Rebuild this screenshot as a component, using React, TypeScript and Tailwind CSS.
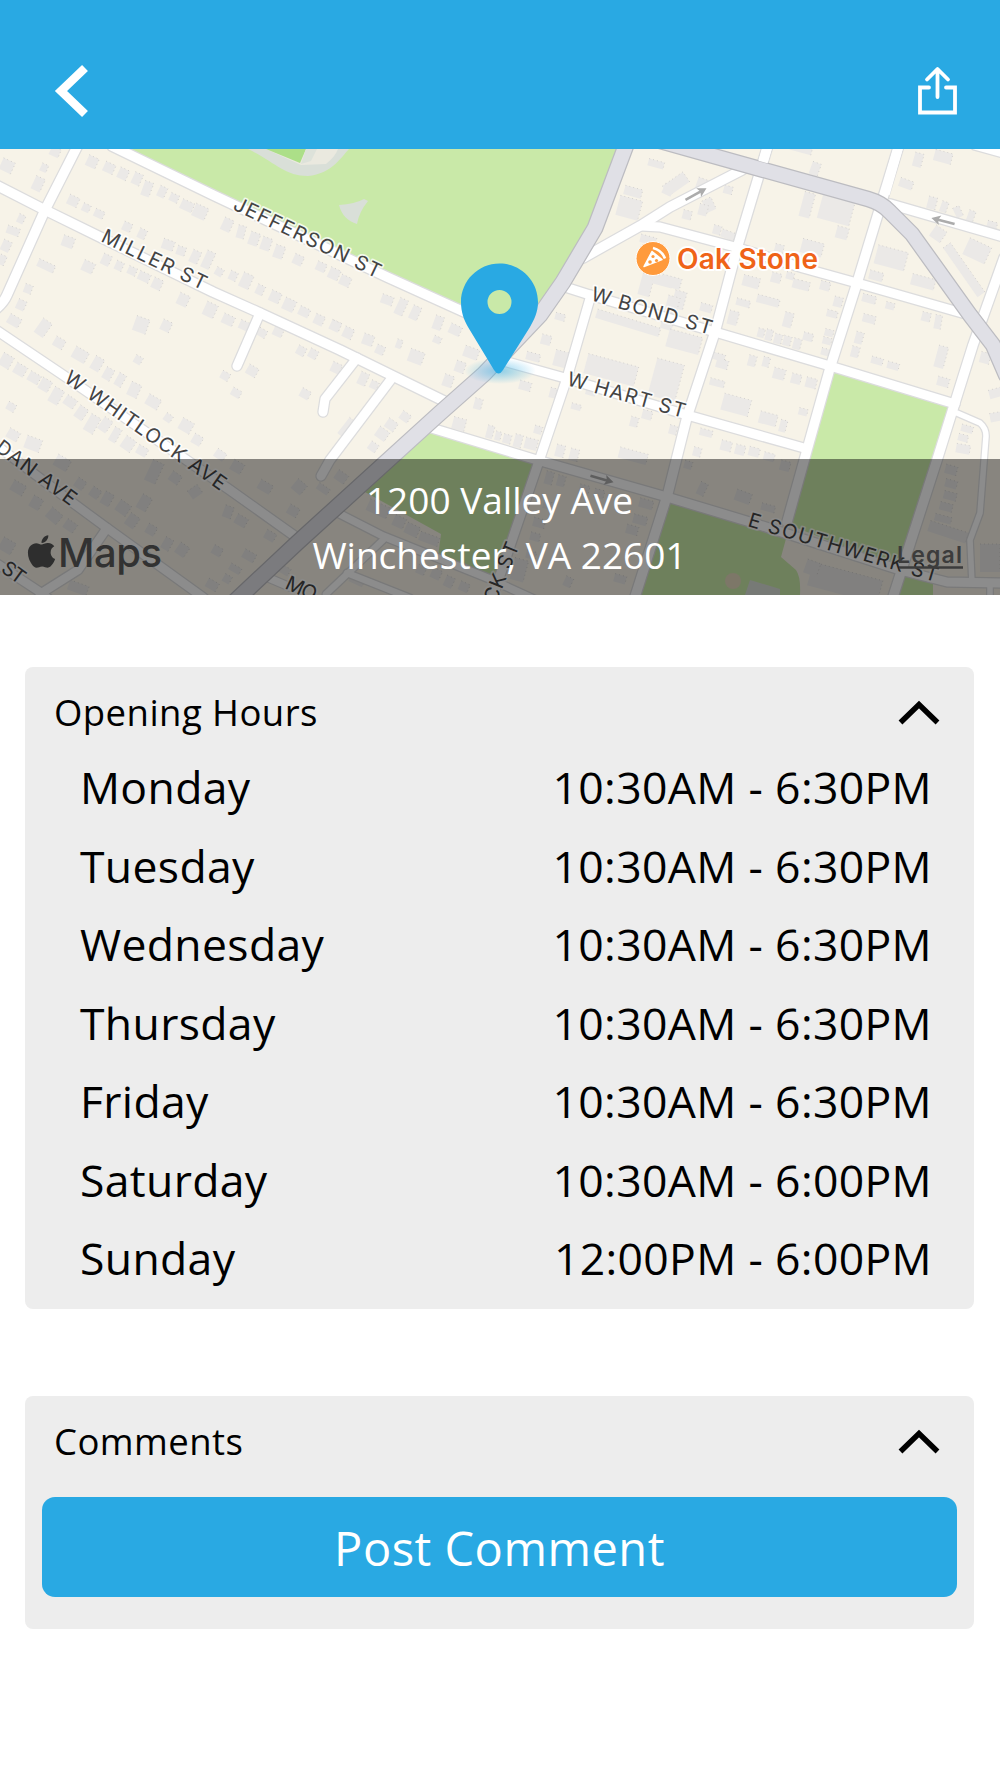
import { FaApple } from "react-icons/fa";

const hours = [
  { day: "Monday", time: "10:30AM - 6:30PM" },
  { day: "Tuesday", time: "10:30AM - 6:30PM" },
  { day: "Wednesday", time: "10:30AM - 6:30PM" },
  { day: "Thursday", time: "10:30AM - 6:30PM" },
  { day: "Friday", time: "10:30AM - 6:30PM" },
  { day: "Saturday", time: "10:30AM - 6:00PM" },
  { day: "Sunday", time: "12:00PM - 6:00PM" },
];

// streets: path and width
const streets: [string, number][] = [
  ["M112 146L213 195L387 277L462 311L520 337", 10],
  ["M-4 185L45 210L100 237L213 292L260 313L340 350L444 401", 10],
  ["M78 145L45 210L7 295Q4 302 -4 309", 10],
  ["M-4 330L63 375L230 490L296 537", 9.5],
  ["M260 313L237 366", 9.5],
  ["M357 358L325 399L323 412", 9.5],
  ["M392 378L330 460L321 476", 9.5],
  ["M-4 445L73 503L107 528L204 598", 9],
  ["M107 528L78 570L40 594", 9],
  ["M-4 563L40 592L50 600", 9],
  ["M583 258L640 226L670 207L742 170", 10],
  ["M642 226L660 227L735 247L803 268L857 283L962 313", 9.5],
  ["M890 204L1004 237", 10],
  ["M975 146L1004 154", 8],
  ["M768 145L738 245L715 332L687 417L668 493L634 600", 10],
  ["M899 145L857 283L830 368L807 450L787 522", 10],
  ["M1004 258L973 345L937 460L892 600", 10],
  ["M957 413L980 423Q986 428 986 436L980 513L970 540L972 583", 6],
  ["M565 287L590 295L715 332L830 366L955 404", 9.5],
  ["M591 295L567 378L537 467L495 590L490 600", 9.5],
  ["M500 360L565 378L687 415L804 448", 9.5],
  ["M428 427L537 460L667 497L750 522L900 570L947 582L1004 583", 9.5],
  ["M990 583L990 600", 6],
  ["M332 510L383 536L490 579L540 602", 8],
  ["M383 540L326 594", 7],
  ["M347 573L410 598", 7],
  ["M264 576L290 587", 8],
];

const highways: [string, number][] = [
  ["M628 140L595 228L563 282L540 315L484 374L440 413L330 513L297 543L232 604", 16],
  ["M660 141L760 169L868 199Q882 203 890 212L912 234L970 315L993 345L1006 375", 15.5],
];

// houses: x, y, width, height, angle
const houses: [number, number, number, number, number][] = [
  [7, 166, 13, 12, 25], [44, 168, 7, 8, 25], [38, 184, 10, 14, 25], [55, 152, 10, 9, 25], [92, 162, 11, 11, 25],
  [109, 168, 11, 10, 25], [123, 174, 10, 11, 25], [137, 179, 9, 12, 25], [147, 189, 9, 15, 20], [162, 192, 8, 11, 25],
  [174, 198, 9, 8, 25], [187, 206, 13, 10, 25], [200, 212, 14, 13, 25], [73, 201, 11, 10, 25], [86, 208, 8, 8, 25],
  [99, 214, 10, 8, 25], [21, 219, 7, 9, 25], [13, 231, 13, 8, 20], [6, 246, 9, 11, 25], [2, 260, 7, 10, 25],
  [68, 242, 12, 11, 20], [46, 266, 18, 8, 25], [88, 267, 12, 11, 25], [106, 260, 9, 11, 25], [119, 266, 8, 9, 25],
  [132, 271, 9, 8, 25], [144, 277, 12, 9, 25], [157, 284, 10, 11, 25], [127, 227, 9, 9, 25], [142, 234, 8, 10, 25],
  [168, 245, 12, 10, 20], [181, 251, 9, 9, 20], [195, 257, 9, 13, 25], [208, 260, 9, 18, 25], [219, 272, 8, 8, 30],
  [233, 276, 8, 9, 25], [246, 281, 11, 15, 25], [260, 290, 8, 10, 25], [275, 297, 11, 11, 25], [289, 305, 12, 12, 25],
  [304, 312, 11, 9, 25], [319, 320, 10, 10, 25], [335, 326, 10, 10, 25], [227, 225, 10, 13, 25], [241, 232, 8, 13, 15],
  [254, 239, 10, 13, 20], [266, 244, 10, 13, 20], [279, 252, 10, 13, 20], [298, 260, 10, 10, 25], [321, 267, 10, 9, 25],
  [334, 274, 11, 11, 25], [345, 281, 11, 10, 25], [183, 300, 11, 12, 25], [210, 310, 12, 14, 25], [228, 320, 12, 10, 25],
  [245, 326, 12, 9, 25], [141, 325, 14, 15, 20], [166, 326, 10, 11, 25], [28, 289, 8, 9, 20], [21, 305, 9, 10, 25],
  [14, 321, 13, 10, 30], [43, 328, 11, 17, 35], [59, 343, 11, 10, 30], [80, 355, 15, 12, 30], [97, 364, 10, 14, 30],
  [108, 374, 9, 12, 30], [120, 380, 8, 13, 30], [138, 360, 8, 8, 30], [6, 361, 12, 13, 30], [20, 370, 12, 11, 30],
  [34, 378, 12, 10, 30], [45, 385, 11, 12, 30], [56, 396, 11, 16, 30], [70, 402, 12, 10, 35], [81, 413, 10, 13, 35],
  [92, 424, 11, 18, 30], [105, 425, 10, 14, 35], [115, 435, 8, 15, 30], [128, 444, 12, 13, 35], [142, 451, 11, 9, 30],
  [11, 407, 9, 8, 30], [13, 435, 12, 10, 30], [33, 444, 16, 13, 20], [134, 390, 11, 14, 25], [153, 402, 14, 11, 30],
  [168, 418, 8, 8, 35], [186, 426, 13, 12, 30], [197, 440, 10, 10, 30], [236, 393, 10, 8, 30], [225, 376, 9, 8, 30],
  [252, 371, 11, 10, 30], [305, 394, 10, 9, 30], [262, 333, 9, 8, 30], [278, 332, 10, 9, 25], [301, 351, 9, 9, 30],
  [313, 354, 9, 9, 30], [336, 368, 10, 10, 25],
  [387, 300, 12, 9, 20], [401, 307, 9, 17, 25], [415, 313, 9, 14, 25], [336, 326, 9, 9, 25], [348, 333, 10, 11, 25],
  [368, 340, 11, 11, 20], [380, 350, 9, 9, 25], [399, 344, 6, 9, 20], [416, 357, 15, 13, 20], [438, 323, 9, 14, 20],
  [455, 330, 12, 10, 25], [437, 340, 8, 7, 25], [471, 353, 15, 11, 20], [460, 367, 10, 11, 20], [448, 381, 10, 12, 20],
  [363, 379, 9, 13, 25], [374, 385, 8, 8, 25], [347, 428, 9, 20, 38], [405, 417, 10, 9, 35], [391, 425, 11, 10, 35],
  [382, 434, 12, 11, 35], [373, 447, 9, 9, 35], [478, 404, 8, 11, 15], [459, 424, 13, 12, 15], [490, 432, 7, 13, 15],
  [498, 436, 6, 9, 15], [507, 439, 8, 9, 15], [518, 441, 8, 13, 15], [531, 444, 13, 11, 15], [538, 430, 8, 8, 15],
  [560, 317, 10, 7, 15], [546, 340, 10, 10, 15], [533, 357, 14, 8, 15], [561, 359, 14, 16, 15], [525, 386, 12, 9, 15],
  [553, 393, 7, 10, 15], [628, 323, 66, 9, 17], [611, 370, 52, 20, 15], [591, 391, 10, 9, 15], [576, 407, 10, 6, 15],
  [560, 451, 9, 12, 15], [574, 455, 9, 12, 15], [633, 456, 29, 11, 15], [634, 422, 8, 10, 15], [647, 415, 10, 9, 15],
  [629, 208, 23, 20, 15], [633, 192, 18, 9, 15], [656, 164, 16, 7, 15], [668, 190, 10, 10, 25], [648, 240, 16, 8, 15],
  [646, 285, 12, 22, 15], [663, 281, 20, 10, 15], [676, 184, 25, 12, -35], [703, 186, 14, 14, 20],
  [801, 149, 22, 7, 15], [815, 169, 9, 13, 20], [709, 205, 10, 13, -25], [687, 215, 9, 9, 15], [703, 210, 9, 11, 15],
  [728, 190, 9, 8, 15], [717, 230, 8, 9, 15], [728, 235, 14, 8, 20], [807, 205, 11, 25, 15], [836, 210, 33, 25, 15],
  [842, 233, 12, 12, 15], [812, 248, 22, 14, 15], [779, 249, 9, 9, 15], [776, 278, 10, 10, 15], [790, 276, 8, 7, 15],
  [797, 284, 9, 9, 15], [805, 286, 9, 9, 15], [825, 286, 10, 9, 15], [751, 282, 17, 11, 15], [743, 303, 14, 7, 15],
  [768, 301, 23, 8, 15], [788, 320, 9, 15, 15], [733, 318, 10, 14, 15], [706, 308, 12, 8, 15], [679, 300, 12, 18, 15],
  [671, 282, 20, 11, 15], [670, 313, 12, 34, 15], [684, 342, 34, 18, 15], [666, 380, 28, 38, 15], [761, 333, 7, 9, 15],
  [769, 335, 7, 11, 15], [778, 339, 8, 10, 15], [787, 341, 8, 10, 15], [797, 344, 8, 11, 15], [808, 337, 10, 8, 15],
  [838, 302, 9, 10, 15], [832, 314, 11, 7, 15], [829, 333, 9, 7, 15], [827, 341, 9, 7, 15], [825, 352, 8, 7, 15],
  [918, 160, 9, 14, 15], [943, 157, 18, 11, 15], [906, 184, 14, 9, 20], [932, 203, 9, 12, 15], [944, 207, 7, 11, 20],
  [958, 212, 7, 11, -25], [971, 216, 7, 11, 20], [992, 225, 10, 7, 15], [938, 234, 13, 13, 35], [977, 251, 24, 18, 25],
  [964, 270, 9, 60, -35], [891, 258, 31, 19, 15], [876, 276, 14, 9, 15], [923, 282, 24, 11, 15], [869, 299, 14, 8, 15],
  [890, 306, 9, 7, 15], [869, 319, 13, 8, 15], [859, 338, 8, 12, 15], [855, 352, 8, 11, 15], [877, 361, 12, 7, 15],
  [893, 366, 12, 7, 15], [926, 317, 9, 9, 15], [938, 322, 7, 14, 10], [941, 357, 10, 22, 15], [985, 358, 10, 11, 15],
  [722, 364, 12, 9, 15], [719, 357, 12, 7, 15], [752, 361, 8, 11, 15], [766, 362, 7, 10, 15], [779, 374, 12, 11, 15],
  [796, 379, 10, 10, 15], [811, 383, 11, 10, 15], [717, 383, 15, 7, 15], [736, 405, 28, 17, 15], [768, 419, 18, 12, 15],
  [783, 426, 7, 12, 15], [803, 412, 9, 7, 15], [706, 433, 13, 7, 15], [697, 452, 8, 9, 15], [726, 446, 11, 10, 15],
  [740, 450, 10, 10, 15], [754, 452, 11, 9, 15], [769, 457, 11, 8, 15], [785, 466, 10, 10, 15], [702, 489, 8, 13, 25],
  [743, 497, 16, 11, 20], [768, 508, 14, 7, 15], [688, 465, 8, 8, 15], [673, 430, 8, 9, 15], [943, 382, 12, 9, 15],
  [996, 393, 14, 9, -15], [996, 417, 12, 9, -10], [967, 429, 12, 7, 15], [963, 438, 10, 7, 15], [963, 449, 14, 9, 10],
  [951, 470, 12, 9, 15], [951, 484, 12, 8, 15], [950, 496, 13, 8, 15], [946, 507, 13, 8, 15], [943, 519, 17, 7, 15],
  [948, 532, 40, 11, 18], [990, 558, 20, 28, 0], [845, 583, 72, 24, 15], [812, 568, 14, 14, 20],
  [62, 463, 15, 12, 30], [18, 488, 14, 11, 30], [36, 503, 11, 12, 30], [54, 516, 14, 12, 40], [70, 526, 12, 10, 35],
  [80, 484, 10, 10, 35], [95, 493, 10, 10, 35], [107, 499, 10, 13, 30], [123, 508, 13, 12, 35], [132, 521, 11, 13, 35],
  [144, 503, 11, 15, 30], [151, 530, 10, 10, 30], [167, 544, 9, 12, 30], [182, 550, 11, 12, 35], [154, 472, 12, 22, 25],
  [175, 478, 11, 10, 35], [195, 492, 12, 10, -35], [220, 455, 11, 9, 35], [237, 467, 12, 11, 30], [228, 512, 9, 12, 20],
  [241, 521, 12, 10, 30], [265, 487, 14, 10, 30], [299, 487, 12, 12, 40], [323, 489, 13, 7, 35], [293, 511, 11, 10, 30],
  [217, 551, 10, 9, 30], [249, 556, 13, 9, 30], [270, 536, 11, 9, 30], [235, 569, 12, 7, 30], [227, 579, 8, 8, 30],
  [212, 585, 12, 9, 30], [284, 570, 12, 8, 30], [7, 546, 14, 13, 30], [78, 588, 20, 10, 20],
  [341, 477, 12, 10, 35], [378, 509, 22, 12, 25], [399, 522, 12, 11, 25], [412, 530, 14, 11, 25], [429, 539, 20, 9, 20],
  [357, 580, 15, 9, 25], [421, 570, 9, 9, 25], [436, 574, 10, 10, 25], [449, 582, 9, 11, 25], [464, 587, 10, 9, 25],
  [549, 478, 8, 13, 15], [561, 481, 8, 11, 15], [547, 505, 8, 8, 15], [539, 523, 12, 9, 15], [535, 537, 10, 8, 15],
  [531, 555, 10, 8, 15], [519, 570, 14, 22, 15], [568, 582, 8, 10, 25], [620, 579, 12, 8, 15], [584, 490, 10, 10, 15],
  [599, 494, 10, 9, 15], [646, 504, 14, 9, 15], [640, 520, 14, 9, 15], [632, 530, 12, 9, 15],
];

const labels = [
  { text: "JEFFERSON ST", x: 232, y: 209, angle: 25.6, length: 161 },
  { text: "MILLER ST", x: 100, y: 241, angle: 25.6, length: 114 },
  { text: "W WHITLOCK AVE", x: 63, y: 381, angle: 35, length: 192 },
  { text: "DAN AVE", x: -6, y: 450, angle: 36.5, length: 95 },
  { text: "ST", x: 0, y: 571, angle: 36, length: 24 },
  { text: "MO", x: 284, y: 588, angle: 25, length: 32 },
  { text: "CK ST", x: 496, y: 604, angle: -68, length: 63 },
  { text: "W BOND ST", x: 590, y: 300, angle: 16.2, length: 125 },
  { text: "W HART ST", x: 566, y: 385, angle: 15.7, length: 122 },
  { text: "E SOUTHWERK ST", x: 747, y: 526, angle: 16.6, length: 197 },
];

const arrows = [
  { x: 696, y: 194, angle: -29 },
  { x: 943, y: 221, angle: 195 },
  { x: 602, y: 479, angle: 16 },
];

function MapView() {
  return (
    <svg viewBox="0 149 1000 446" className="block h-[446px] w-full">
      <rect x="0" y="149" width="1000" height="446" fill="#f7f3e8" />
      {/* parks */}
      <g fill="#c9e9a8">
        <path d="M118 149H625L595 228L540 315L500 329L387 277L213 195Z" />
        <path d="M430 430L537 462L497 579L488 578L438 557L441 534L365 492Z" />
        <path d="M833 371L950 406L907 550L905 571L787 524Z" />
        <path d="M667 500L787 535L781 557L796 570Q801 577 800 595H634Z" />
        <path d="M903 573L933 583V595H896Z" />
      </g>
      <path d="M248 149C275 162 284 176 308 176C332 174 342 156 349 149Z" fill="#d9dfd8" />
      <path d="M266 149L301 165L326 164Q335 157 338 149Z" fill="#eae9df" />
      <path d="M266 149L300 163L306 149Z" fill="#acdf88" />
      <path d="M306 149L301 164L311 161L317 149Z" fill="#dde2da" />
      <path d="M339 205Q355 204 364 199L368 201Q359 212 357 224Q343 220 339 205Z" fill="#d9dfd8" />
      <circle cx="733" cy="581" r="8" fill="#e3d9bd" />
      <path d="M750 580L780 589V595H745Z" fill="#d9dfd8" />

      {/* houses */}
      {houses.map(([x, y, w, h, angle], i) => (
        <g key={i} transform={`translate(${x} ${y}) rotate(${angle})`}>
          <rect x={-w / 2} y={-h / 2} width={w} height={h} fill="#ebe9e7" />
          <path
            d={`M${-w / 2} ${-h / 2}H${w / 2}V${h / 2}`}
            fill="none"
            stroke="#cfcdca"
            strokeWidth="0.8"
            strokeDasharray="1 3"
          />
        </g>
      ))}

      {/* streets */}
      <g fill="none" strokeLinecap="round" strokeLinejoin="round">
        {streets.map(([d, w], i) => (
          <path key={i} d={d} stroke="#dcdcdd" strokeWidth={w + 2} />
        ))}
        {streets.map(([d, w], i) => (
          <path key={i} d={d} stroke="#ffffff" strokeWidth={w - 0.5} />
        ))}
        {highways.map(([d, w], i) => (
          <path key={i} d={d} stroke="#bcbcc1" strokeWidth={w + 1} />
        ))}
        {highways.map(([d, w], i) => (
          <path key={i} d={d} stroke="#e0e0e6" strokeWidth={w - 1.5} />
        ))}
        {/* cross streets over the highway */}
        <path d="M768 145L763 162M899 145L885 194" stroke="#ffffff" strokeWidth="9.5" strokeLinecap="butt" />
      </g>
      {arrows.map((a, i) => (
        <path
          key={i}
          d="M-12 0H6"
          transform={`translate(${a.x} ${a.y}) rotate(${a.angle})`}
          stroke="#acacac"
          strokeWidth="2.6"
        />
      ))}
      {arrows.map((a, i) => (
        <path
          key={i}
          d="M3 -5L12 0L3 5L5 0Z"
          transform={`translate(${a.x} ${a.y}) rotate(${a.angle})`}
          fill="#acacac"
        />
      ))}

      {labels.map((l) => (
        <text
          key={l.text + l.x}
          transform={`translate(${l.x} ${l.y}) rotate(${l.angle})`}
          textLength={l.length}
          className="font-['Inter',sans-serif] text-[20px]"
          fill="#444444"
          stroke="#ffffff"
          strokeOpacity="0.75"
          strokeWidth="3.5"
          strokeLinejoin="round"
          paintOrder="stroke"
        >
          {l.text}
        </text>
      ))}

      {/* restaurant */}
      <circle cx="653" cy="258.5" r="17" fill="#ff9a3c" stroke="#ffffff" strokeWidth="1" />
      <g transform="translate(653 258.5)">
        <path d="M-1 -7L9 1L-9 8Z" fill="#ffffff" stroke="#ffffff" strokeWidth="1.5" strokeLinejoin="round" />
        <path d="M0 -10.5Q9 -8 12 0" fill="none" stroke="#ffffff" strokeWidth="2.6" />
        <circle cx="0" cy="-2" r="1.6" fill="#ff9a3c" />
        <circle cx="3.5" cy="2" r="1.6" fill="#ff9a3c" />
        <circle cx="-3" cy="3.5" r="1.8" fill="#ff9a3c" />
      </g>
      <text
        x="677"
        y="269"
        textLength="141"
        className="font-['Inter',sans-serif] text-[28px] font-semibold"
        fill="#ef6318"
        stroke="#ffffff"
        strokeWidth="4"
        strokeLinejoin="round"
        paintOrder="stroke"
      >
        Oak Stone
      </text>

      {/* pin */}
      <defs>
        <radialGradient id="glow">
          <stop offset="0" stopColor="#29a9e3" stopOpacity="0.5" />
          <stop offset="1" stopColor="#29a9e3" stopOpacity="0" />
        </radialGradient>
      </defs>
      <ellipse cx="500" cy="371" rx="36" ry="13" fill="url(#glow)" />
      <path
        fillRule="evenodd"
        fill="#29a9e3"
        d="M499.5 263.5C521 263.5 538 281 538 302C538 312 534 320 530 327L503 370Q498.5 377 494 370L468 327C464 320 461 312 461 302C461 281 478 263.5 499.5 263.5ZM499.5 290A12 12 0 1 0 499.5 314A12 12 0 1 0 499.5 290Z"
      />

      <FaApple x={23} y={533} size={37} color="#555555" />
      <text
        x="58"
        y="567"
        textLength="104"
        className="font-['Inter',sans-serif] text-[40px] font-medium"
        fill="#5c5c5c"
      >
        Maps
      </text>
      <text
        x="897"
        y="563"
        textLength="65"
        className="font-['Inter',sans-serif] text-[23px] font-semibold"
        fill="#6e6e6e"
      >
        Legal
      </text>
      <path d="M899 567.5H963" stroke="#6e6e6e" strokeWidth="2.5" />
    </svg>
  );
}

function Chevron() {
  return (
    <svg viewBox="0 0 42 26" className="h-[26px] w-[42px]">
      <path d="M2.5 22.5L21 4.5L39.5 22.5" fill="none" stroke="#000000" strokeWidth="5.5" />
    </svg>
  );
}

export default function App() {
  return (
    <div className="flex h-[1778px] w-[1000px] flex-col overflow-hidden bg-white font-['Open_Sans',sans-serif] text-black">
      <header className="flex h-[149px] shrink-0 items-start justify-between bg-[#29a9e3] pt-[63px] pr-[41px] pl-[54px]">
        <button>
          <svg viewBox="0 0 36 56" className="h-[56px] w-[36px]">
            <path d="M31 5L7 28L31 51" fill="none" stroke="#ffffff" strokeWidth="8.5" />
          </svg>
        </button>
        <button>
          <svg viewBox="0 0 42 56" className="h-[56px] w-[42px]" fill="none" stroke="#ffffff" strokeWidth="3.8">
            <path d="M12 24.5H3V49.5H38V24.5H29" strokeLinecap="round" />
            <path d="M20.5 34V6.5M10 16.5L20.5 6L31 16.5" strokeLinecap="round" strokeLinejoin="round" />
          </svg>
        </button>
      </header>

      <div className="relative h-[446px] shrink-0">
        <MapView />
        <div className="absolute inset-x-0 bottom-0 h-[136px] bg-black/45 pt-[13px] pr-px text-center text-[37px] leading-[55px] text-white">
          <p>1200 Valley Ave</p>
          <p>Winchester, VA 22601</p>
        </div>
      </div>

      <section className="mt-[72px] mr-[26px] ml-[25px] h-[642px] shrink-0 rounded-[8px] bg-[#ededed]">
        <div className="flex h-[81px] items-center justify-between pt-[10px] pr-[34px] pl-[29px]">
          <h2 className="text-[36.5px] tracking-[0.45px]">Opening Hours</h2>
          <Chevron />
        </div>
        <ul className="pr-[42px] pl-[55px]">
          {hours.map((h) => (
            <li key={h.day} className="flex h-[78.6px] items-center justify-between text-[44.5px] tracking-[0.35px]">
              <span>{h.day}</span>
              <span>{h.time}</span>
            </li>
          ))}
        </ul>
      </section>

      <section className="mt-[87px] mr-[26px] ml-[25px] h-[233px] shrink-0 rounded-[8px] bg-[#ededed] px-[17px]">
        <div className="flex h-[101px] items-start justify-between pt-[19px] pr-[17px] pl-[12px]">
          <h2 className="text-[36.5px] leading-[52px] tracking-[0.45px]">Comments</h2>
          <div className="pt-[14px]">
            <Chevron />
          </div>
        </div>
        <button className="flex h-[100px] w-full items-center justify-center rounded-[13px] bg-[#29a9e3] pt-[3px] text-[47px] tracking-[0.5px] text-white">
          Post Comment
        </button>
      </section>
    </div>
  );
}
